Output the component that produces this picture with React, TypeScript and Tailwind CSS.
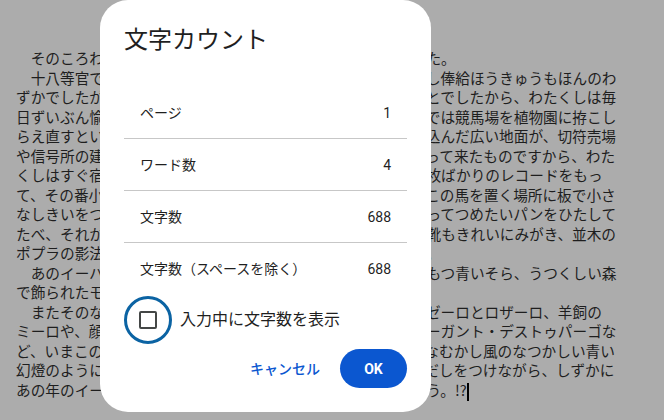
import { useState } from "react";

const lines = [
  "　そのころわたくしは、モリーオ市の博物局に勤めて居りました。",
  "　十八等官でしたから役所のなかでも、ずうっと下の方でしたし俸給ほうきゅうもほんのわ",
  "ずかでしたが、受持ちが標本の採集や整理で生れ付き好きなことでしたから、わたくしは毎",
  "日ずいぶん愉快にはたらきました。殊にそのころ、モリーオ市では競馬場を植物園に拵こし",
  "らえ直すというので、その景色のいいまわりにアカシヤを植え込んだ広い地面が、切符売場",
  "や信号所の建物のついたまま、わたくしどもの役所の方へまわって来たものですから、わた",
  "くしはすぐ宿直という名前で月賦で買った小さな蓄音器と二十枚ばかりのレコードをもっ",
  "て、その番小屋にひとり住むことになりました。わたくしはそこの馬を置く場所に板で小さ",
  "なしきいをつけて一疋の山羊を飼いました。毎朝その乳をしぼってつめたいパンをひたして",
  "たべ、それから黒い革のかばんへすこしの書類や雑誌を入れ、靴もきれいにみがき、並木の",
  "ポプラの影法師を大股にわたって市の役所へ出て行くのでした。",
  "　あのイーハトーヴォのすきとおった風、夏でも底に冷たさをもつ青いそら、うつくしい森",
  "で飾られたモリーオ市、郊外のぎらぎらひかる草の波。",
  "　またそのなかでいっしょになったたくさんのひとたち、ファゼーロとロザーロ、羊飼の",
  "ミーロや、顔の赤いこどもたち、地主のテーモ、山猫博士のボーガント・デストゥパーゴな",
  "ど、いまこの暗い巨きな石の建物のなかで考えていると、みんなむかし風のなつかしい青い",
  "幻燈のように思われます。では、わたくしはいつかの小さなみだしをつけながら、しずかに",
];

const stats = [
  { label: "ページ", value: "1" },
  { label: "ワード数", value: "4" },
  { label: "文字数", value: "688" },
  { label: "文字数（スペースを除く）", value: "688" },
];

export default function App() {
  const [showWhileTyping, setShowWhileTyping] = useState(false);

  return (
    <div className="relative h-[420px] w-[664px] overflow-hidden bg-[#acacac]">
      {/* document underneath the scrim */}
      <div className="pl-4 pt-12 font-['Noto_Sans_CJK_JP',sans-serif] text-[14.667px] leading-[19.5px] text-[#1e1e1e]">
        {lines.map((line, i) => (
          <div key={i} className="whitespace-nowrap">
            {line}
          </div>
        ))}
        <div className="whitespace-nowrap">
          あの年のイーハトーヴォの五月から十月までを書きつけましょう。!?
          <span className="inline-block h-[18px] w-[2px] bg-black align-middle" />
        </div>
      </div>

      {/* word count dialog */}
      <div className="absolute left-[100px] top-0 flex h-[412px] w-[331px] flex-col rounded-[28px] bg-white p-6 font-['Roboto','Noto_Sans_CJK_JP',sans-serif]">
        <h1 className="h-8 text-2xl leading-8 text-[#1f1f1f]">文字カウント</h1>

        <div className="mt-[31px]">
          {stats.map((s, i) => (
            <div
              key={s.label}
              className={
                i < stats.length - 1
                  ? "flex h-[52px] items-center justify-between border-b border-[#c7c7c7] px-4 text-sm text-[#1f1f1f]"
                  : "flex h-[52px] items-center justify-between px-4 text-sm text-[#1f1f1f]"
              }
            >
              <span>{s.label}</span>
              <span>{s.value}</span>
            </div>
          ))}
        </div>

        <label className="mt-px flex cursor-pointer items-center gap-2">
          <span className="flex h-12 w-12 items-center justify-center rounded-full border-[3px] border-[#0b63a3]">
            <input
              type="checkbox"
              checked={showWhileTyping}
              onChange={(e) => setShowWhileTyping(e.target.checked)}
              className="h-[18px] w-[18px] appearance-none rounded-[2px] border-2 border-[#444746] checked:bg-[#0b57d0]"
            />
          </span>
          <span className="text-base text-[#1f1f1f]">入力中に文字数を表示</span>
        </label>

        <div className="mt-[5px] flex items-center justify-end gap-2">
          <button className="h-[39px] px-3 text-sm font-medium text-[#0b57d0]">キャンセル</button>
          <button className="h-[39px] w-[67px] rounded-full bg-[#0b57d0] text-sm font-bold text-white">
            OK
          </button>
        </div>
      </div>
    </div>
  );
}
